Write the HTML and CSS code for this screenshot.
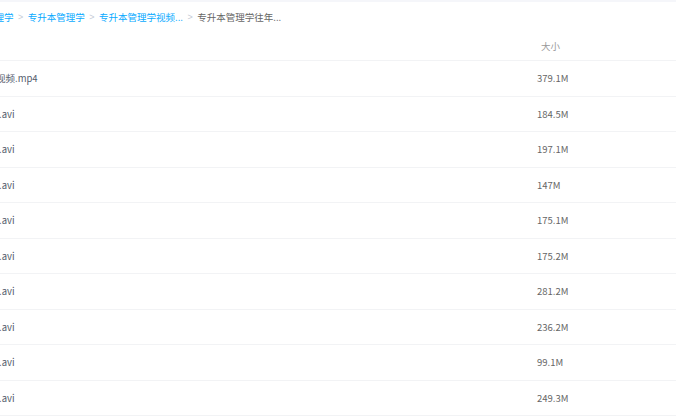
FILE: index.html
```html
<!DOCTYPE html>
<html lang="zh-CN">
<head>
    <meta charset="UTF-8">
    <title>文件列表</title>
    <link rel="stylesheet" href="styles.css">
</head>
<body>
    <div class="topbar"></div>
    <nav class="crumbs">
        <a class="first">管理学</a>
        <span class="sep">&gt;</span>
        <a>专升本管理学</a>
        <span class="sep">&gt;</span>
        <a>专升本管理学视频...</a>
        <span class="sep">&gt;</span>
        <span class="current">专升本管理学往年...</span>
    </nav>
    <div class="list">
        <div class="head">
            <div class="name"></div>
            <div class="size">大小</div>
        </div>
        <div class="row"><div class="name mp4">视频.mp4</div><div class="size">379.1M</div></div>
        <div class="row"><div class="name">.avi</div><div class="size">184.5M</div></div>
        <div class="row"><div class="name">.avi</div><div class="size">197.1M</div></div>
        <div class="row"><div class="name">.avi</div><div class="size">147M</div></div>
        <div class="row"><div class="name">.avi</div><div class="size">175.1M</div></div>
        <div class="row"><div class="name">.avi</div><div class="size">175.2M</div></div>
        <div class="row"><div class="name">.avi</div><div class="size">281.2M</div></div>
        <div class="row"><div class="name">.avi</div><div class="size">236.2M</div></div>
        <div class="row"><div class="name">.avi</div><div class="size">99.1M</div></div>
        <div class="row"><div class="name">.avi</div><div class="size">249.3M</div></div>
    </div>
</body>
</html>
```

FILE: styles.css
```css
body {
    margin: 0;
    padding: 0;
    background: #fff;
    font-family: "Microsoft YaHei", "Noto Sans CJK SC", sans-serif;
    font-size: 9.5px;
    overflow: hidden;
    width: 676px;
    height: 418px;
}
.topbar {
    height: 2px;
    background-color: #f5f6fa;
}
.crumbs {
    display: flex;
    align-items: center;
    height: 30px;
    white-space: nowrap;
    margin-left: -15px;
}
.crumbs a {
    color: #09aaff;
    cursor: pointer;
}
.crumbs .sep {
    color: #c5cbd6;
    margin: 0 4.5px;
    font-family: "Liberation Sans", sans-serif;
    font-size: 9px;
}
.crumbs .current {
    color: #666;
}
.head, .row {
    display: grid;
    grid-template-columns: 537px 1fr;
    align-items: center;
    border-bottom: 1px solid #f2f3f5;
}
.head {
    height: 28px;
    color: #999;
}
.head .size {
    padding-left: 4px;
}
.row {
    height: 34.5px;
    color: #555d6e;
}
.row .size {
    color: #666;
}
.name {
    white-space: nowrap;
    overflow: hidden;
    margin-left: -1px;
}
.name.mp4 {
    margin-left: -4px;
}
```
